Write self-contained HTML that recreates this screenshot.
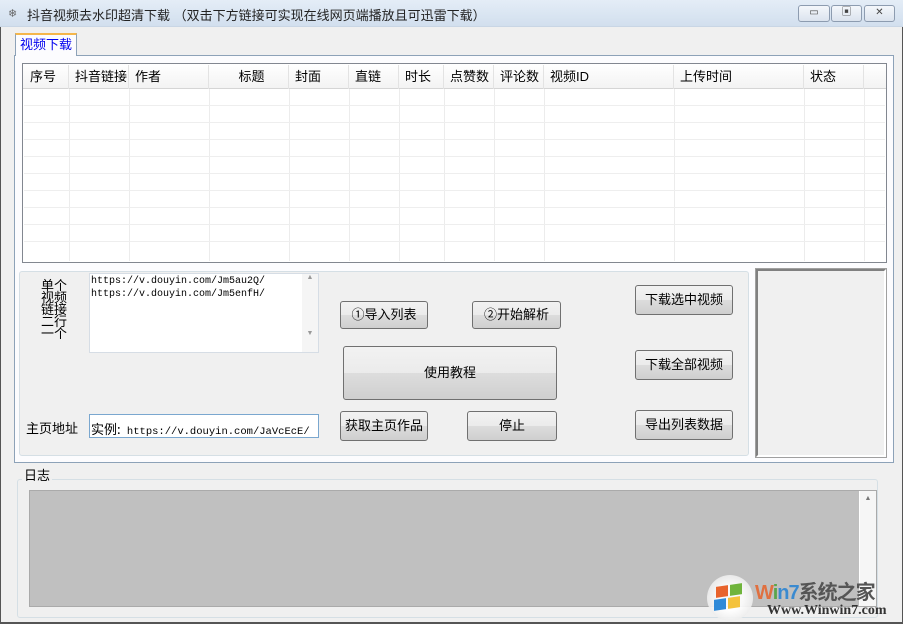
<!DOCTYPE html>
<html><head><meta charset="utf-8"><style>
*{box-sizing:border-box;margin:0;padding:0}
body{width:903px;height:624px;overflow:hidden;background:#f0f0f0;font-family:"Liberation Sans","Noto Sans CJK SC",sans-serif;font-size:12px;color:#000;position:relative}
.a{position:absolute}
.title{left:0;top:0;width:903px;height:27px;background:linear-gradient(#e4edf7,#d2dfee);border-bottom:1px solid #c9d6e5}
.tb{top:5px;height:17px;border:1px solid #8d9cb0;border-radius:3px;background:linear-gradient(#f4f7fb,#dbe3ee);color:#444;font-size:10px;text-align:center;line-height:14px}
.btn{border:1px solid #707070;border-radius:3px;background:linear-gradient(#f2f2f2 0,#ebebeb 50%,#dddddd 50%,#cfcfcf 100%);text-align:center;font-size:13px}
.hd{top:65px;height:24px;line-height:24px;font-size:13px;border-right:1px solid #e3e3e3;padding-left:6px;color:#000}
.vl{top:89px;height:172px;border-left:1px solid #ececec}
.hl{left:24px;width:861px;border-top:1px solid #eeeeee}
.mono{font-family:"Liberation Mono","Noto Sans CJK SC",monospace;font-size:10px}
</style></head><body>
<div class="a title"></div>
<div class="a" style="left:8px;top:7px;font-size:11px;color:#666">❄</div>
<div class="a" style="left:27px;top:5px;font-size:13px;color:#222">抖音视频去水印超清下载 （双击下方链接可实现在线网页端播放且可迅雷下载）</div>
<div class="a tb" style="left:798px;width:32px">▭</div>
<div class="a tb" style="left:831px;width:31px">▣</div>
<div class="a tb" style="left:864px;width:31px">✕</div>
<div class="a" style="left:0;top:27px;width:1px;height:597px;background:#555"></div>
<div class="a" style="left:902px;top:27px;width:1px;height:597px;background:#555"></div>
<div class="a" style="left:0;top:622px;width:903px;height:2px;background:#555"></div>

<div class="a" style="left:14px;top:55px;width:880px;height:408px;border:1px solid #8da2b8;background:#fcfcfe"></div>
<div class="a" style="left:15px;top:33px;width:62px;height:23px;border:1px solid #8da2b8;border-bottom:none;border-top:2px solid #f5b64a;background:#fcfcfe;color:#0000ee;font-size:13px;text-align:center;line-height:20px">视频下载</div>

<div class="a" style="left:22px;top:63px;width:865px;height:200px;border:1px solid #828790;background:#fff"></div>
<div class="a" style="left:23px;top:64px;width:863px;height:25px;background:linear-gradient(#fff,#f3f3f3);border-bottom:1px solid #d5d5d5"></div>
<div class="a hd" style="left:24px;width:45px">序号</div>
<div class="a hd" style="left:69px;width:60px">抖音链接</div>
<div class="a hd" style="left:129px;width:80px">作者</div>
<div class="a hd" style="left:209px;width:80px;text-align:center">标题</div>
<div class="a hd" style="left:289px;width:60px">封面</div>
<div class="a hd" style="left:349px;width:50px">直链</div>
<div class="a hd" style="left:399px;width:45px">时长</div>
<div class="a hd" style="left:444px;width:50px">点赞数</div>
<div class="a hd" style="left:494px;width:50px">评论数</div>
<div class="a hd" style="left:544px;width:130px">视频ID</div>
<div class="a hd" style="left:674px;width:130px">上传时间</div>
<div class="a hd" style="left:804px;width:60px">状态</div>
<div class="a vl" style="left:69px"></div><div class="a vl" style="left:129px"></div><div class="a vl" style="left:209px"></div><div class="a vl" style="left:289px"></div><div class="a vl" style="left:349px"></div><div class="a vl" style="left:399px"></div><div class="a vl" style="left:444px"></div><div class="a vl" style="left:494px"></div><div class="a vl" style="left:544px"></div><div class="a vl" style="left:674px"></div><div class="a vl" style="left:804px"></div><div class="a vl" style="left:864px"></div>
<div class="a hl" style="top:105px"></div><div class="a hl" style="top:122px"></div><div class="a hl" style="top:139px"></div><div class="a hl" style="top:156px"></div><div class="a hl" style="top:173px"></div><div class="a hl" style="top:190px"></div><div class="a hl" style="top:207px"></div><div class="a hl" style="top:224px"></div><div class="a hl" style="top:241px"></div>

<div class="a" style="left:19px;top:271px;width:730px;height:185px;border:1px solid #d5dfe5;border-radius:3px;background:#f0f0f0"></div>
<div class="a" style="left:41px;top:280px;font-size:13px;line-height:12px;width:28px">单个<br>视频<br>链接<br>二行<br>一个</div>
<div class="a" style="left:89px;top:273px;width:230px;height:80px;border:1px solid #d6dde5;background:#fff"></div>
<div class="a" style="left:302px;top:274px;width:16px;height:78px;background:#f5f5f5;color:#999;font-size:7px;text-align:center">▲<br><br><br><br><br><br><br><br>▼</div>
<div class="a mono" style="left:91px;top:275px;line-height:13px">https://v.douyin.com/Jm5au2Q/<br>https://v.douyin.com/Jm5enfH/</div>
<div class="a" style="left:26px;top:418px;font-size:13px">主页地址</div>
<div class="a" style="left:89px;top:414px;width:230px;height:24px;border:1px solid #7aa7cf;background:#fff"></div>
<div class="a mono" style="left:91px;top:419px;font-size:10.5px"><span style="font-size:13px;font-family:'Noto Sans CJK SC',sans-serif">实例:</span> https://v.douyin.com/JaVcEcE/</div>

<div class="a btn" style="left:340px;top:301px;width:88px;height:28px;line-height:26px">①导入列表</div>
<div class="a btn" style="left:472px;top:301px;width:89px;height:28px;line-height:26px">②开始解析</div>
<div class="a btn" style="left:343px;top:346px;width:214px;height:54px;line-height:52px">使用教程</div>
<div class="a btn" style="left:340px;top:411px;width:88px;height:30px;line-height:28px">获取主页作品</div>
<div class="a btn" style="left:467px;top:411px;width:90px;height:30px;line-height:28px">停止</div>
<div class="a btn" style="left:635px;top:285px;width:98px;height:30px;line-height:28px">下载选中视频</div>
<div class="a btn" style="left:635px;top:350px;width:98px;height:30px;line-height:28px">下载全部视频</div>
<div class="a btn" style="left:635px;top:410px;width:98px;height:30px;line-height:28px">导出列表数据</div>

<div class="a" style="left:756px;top:269px;width:130px;height:188px;border:2px solid #808080;border-right-color:#fff;border-bottom-color:#fff;outline:1px solid #a0a0a0;background:#f0f0f0"></div>

<div class="a" style="left:17px;top:479px;width:861px;height:139px;border:1px solid #d5dfe5;border-radius:3px"></div>
<div class="a" style="left:22px;top:465px;font-size:13px;background:#f0f0f0;padding:0 2px">日志</div>
<div class="a" style="left:29px;top:490px;width:848px;height:117px;border:1px solid #aaa;background:#fff"></div>
<div class="a" style="left:30px;top:491px;width:829px;height:115px;background:#c0c0c0"></div>
<div class="a" style="left:860px;top:491px;width:16px;height:115px;background:#f6f6f6;color:#777;font-size:7px;text-align:center;padding-top:4px">▲</div>

<div class="a" style="left:707px;top:575px;width:46px;height:46px;border-radius:50%;background:radial-gradient(circle,#fff 40%,#ddd 100%);opacity:.9"></div>
<div class="a" style="left:716px;top:586px;width:12px;height:11px;background:#e8632c;transform:skewY(-8deg)"></div>
<div class="a" style="left:730px;top:584px;width:12px;height:11px;background:#6fb43b;transform:skewY(-8deg)"></div>
<div class="a" style="left:714px;top:599px;width:12px;height:11px;background:#2f8ad8;transform:skewY(-8deg)"></div>
<div class="a" style="left:728px;top:597px;width:12px;height:11px;background:#f4c23b;transform:skewY(-8deg)"></div>
<div class="a" style="left:755px;top:576px;font-size:20px;font-weight:bold;color:#e07040;letter-spacing:-1px;white-space:nowrap">W<span style="color:#5aa54a">i</span><span style="color:#3a8ad0">n7</span><span style="color:#555">系统之家</span></div>
<div class="a" style="left:767px;top:603px;font-family:'Liberation Serif',serif;font-weight:bold;font-size:14px;color:#333;white-space:nowrap">Www.Winwin7.com</div>
</body></html>
